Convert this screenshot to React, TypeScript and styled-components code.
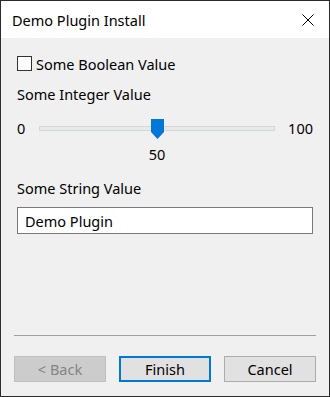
import React, { useState } from 'react';
import styled, { createGlobalStyle } from 'styled-components';

const GlobalStyle = createGlobalStyle`
  html, body {
    margin: 0;
    padding: 0;
    background: #ffffff;
  }
  body {
    font-family: 'Noto Sans', 'Open Sans', sans-serif;
    color: #000000;
  }
`;

const Window = styled.div`
  width: 330px;
  height: 397px;
  box-sizing: border-box;
  border: 1px solid #2b2b2b;
  display: flex;
  flex-direction: column;
  background: #f0f0f0;
`;

const TitleBar = styled.div`
  height: 37px;
  flex: none;
  background: #ffffff;
  display: flex;
  align-items: center;
  justify-content: space-between;
  padding: 0 15px 0 11px;
`;

const Title = styled.span`
  font-size: 14.5px;
  color: #000000;
`;

const CloseButton = styled.button`
  border: none;
  background: transparent;
  padding: 0;
  width: 12px;
  height: 12px;
  display: flex;
  cursor: default;
`;

const Body = styled.div`
  flex: 1;
  display: flex;
  flex-direction: column;
  padding: 18px 16px 0 16px;
`;

const CheckRow = styled.label`
  display: flex;
  align-items: center;
  gap: 4px;
  height: 15px;
  font-size: 14.5px;
`;

const CheckBox = styled.span`
  width: 15px;
  height: 15px;
  box-sizing: border-box;
  border: 1px solid #333333;
  background: #ffffff;
  flex: none;
`;

const FieldLabel = styled.div<{ $top: number }>`
  margin-top: ${(p) => p.$top}px;
  font-size: 14.5px;
  line-height: 20px;
  height: 20px;
`;

const SliderRow = styled.div`
  margin-top: 14px;
  display: flex;
  align-items: flex-start;
  height: 22px;
`;

const RangeEnd = styled.span<{ $width: number; $align: string }>`
  width: ${(p) => p.$width}px;
  text-align: ${(p) => p.$align};
  font-size: 14.5px;
  line-height: 20px;
  flex: none;
`;

const Track = styled.div`
  position: relative;
  flex: 1;
  height: 5px;
  margin: 8px 0 0 0;
  box-sizing: border-box;
  background: #e7eaea;
  border: 1px solid #d6d6d6;
`;

const Thumb = styled.svg`
  position: absolute;
  top: -8px;
  width: 13px;
  height: 20px;
  margin-left: -6.5px;
`;

const ValueRow = styled.div`
  position: relative;
  height: 20px;
  margin-top: 4px;
`;

const ValueText = styled.span`
  position: absolute;
  transform: translateX(-50%);
  font-size: 14.5px;
  line-height: 20px;
`;

const TextBox = styled.input`
  margin-top: 9px;
  height: 27px;
  box-sizing: border-box;
  border: 1px solid #7a7a7a;
  background: #ffffff;
  font-family: inherit;
  font-size: 14.5px;
  padding: 0 7px;
  outline: none;
  color: #000000;
`;

const Spacer = styled.div`
  flex: 1;
`;

const Separator = styled.hr`
  margin: 0 -3px;
  border: none;
  border-top: 1px solid #a0a0a0;
  height: 0;
`;

const ButtonRow = styled.div`
  display: flex;
  justify-content: space-between;
  margin: 20px -3px 14px -3px;
`;

const DialogButton = styled.button<{ $primary?: boolean }>`
  width: 92px;
  height: 26px;
  box-sizing: border-box;
  font-family: inherit;
  font-size: 14.5px;
  padding: 0;
  background: #e1e1e1;
  color: #000000;
  border: ${(p) => (p.$primary ? '2px solid #0078d7' : '1px solid #adadad')};
  cursor: default;

  &:disabled {
    background: #cccccc;
    border-color: #bfbfbf;
    color: #838383;
  }
`;

const App: React.FC = () => {
  const [text, setText] = useState('Demo Plugin');
  const min = 0;
  const max = 100;
  const value = 50;
  const pct = ((value - min) / (max - min)) * 100;

  return (
    <>
      <GlobalStyle />
      <Window>
        <TitleBar>
          <Title>Demo Plugin Install</Title>
          <CloseButton aria-label="Close">
            <svg width="12" height="12" viewBox="0 0 12 12">
              <path d="M0.5 0.5 L11.5 11.5 M11.5 0.5 L0.5 11.5" stroke="#000" strokeWidth="1" fill="none" />
            </svg>
          </CloseButton>
        </TitleBar>
        <Body>
          <CheckRow>
            <CheckBox />
            Some Boolean Value
          </CheckRow>
          <FieldLabel $top={13}>Some Integer Value</FieldLabel>
          <SliderRow>
            <RangeEnd $width={22} $align="left">{min}</RangeEnd>
            <Track>
              <Thumb viewBox="0 0 13 20" style={{ left: `${pct}%` }}>
                <path d="M0 0 H13 V13 L6.5 20 L0 13 Z" fill="#0078d7" />
              </Thumb>
            </Track>
            <RangeEnd $width={38} $align="right">{max}</RangeEnd>
          </SliderRow>
          <ValueRow>
            <ValueText style={{ left: '140px' }}>{value}</ValueText>
          </ValueRow>
          <FieldLabel $top={14}>Some String Value</FieldLabel>
          <TextBox value={text} onChange={(e) => setText(e.target.value)} />
          <Spacer />
          <Separator />
          <ButtonRow>
            <DialogButton disabled>&lt; Back</DialogButton>
            <DialogButton $primary>Finish</DialogButton>
            <DialogButton>Cancel</DialogButton>
          </ButtonRow>
        </Body>
      </Window>
    </>
  );
};

export default App;
